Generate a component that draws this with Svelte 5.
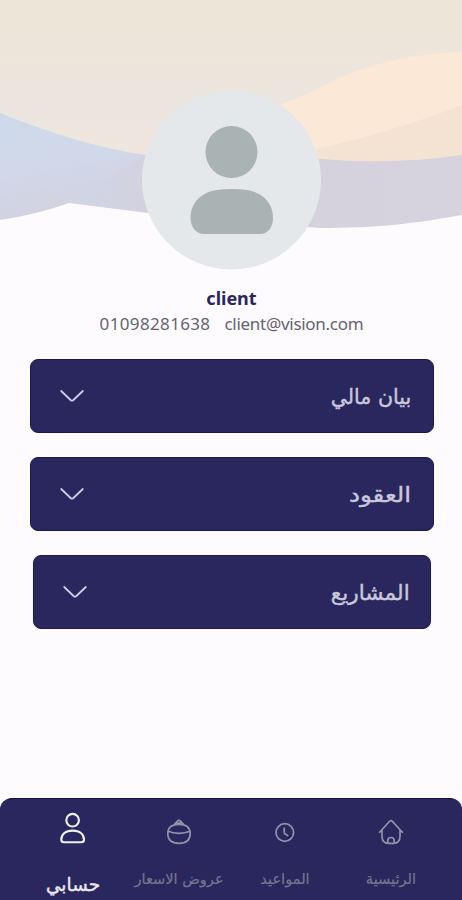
<script lang="ts">
  type Section = { title: string; stretch: number; narrow?: boolean };
  type Tab = { id: string; label: string };

  const user = { name: "client", phone: "01098281638", email: "client@vision.com" };

  const sections: Section[] = [
    { title: "بيان مالي", stretch: 0.98 },
    { title: "العقود", stretch: 1.17 },
    { title: "المشاريع", stretch: 1.03, narrow: true },
  ];

  const tabs: Tab[] = [
    { id: "home", label: "الرئيسية" },
    { id: "visits", label: "المواعيد" },
    { id: "offers", label: "عروض الاسعار" },
    { id: "account", label: "حسابي" },
  ];

  let active = $state("account");
</script>

<div class="screen" dir="rtl">
  <header>
    <svg class="waves" viewBox="0 0 462 270" aria-hidden="true">
      <defs>
        <linearGradient id="sand" x1="0" y1="0" x2="0" y2="1">
          <stop offset="0" stop-color="#ece4d6" />
          <stop offset="0.35" stop-color="#eee6db" />
          <stop offset="0.65" stop-color="#ece5df" />
          <stop offset="1" stop-color="#efe6de" />
        </linearGradient>
        <linearGradient id="sky" x1="0" y1="0" x2="0.25" y2="1">
          <stop offset="0" stop-color="#cddaeb" />
          <stop offset="0.5" stop-color="#d0d8e9" />
          <stop offset="1" stop-color="#d3d1e0" />
        </linearGradient>
        <linearGradient id="dusk" x1="0" y1="0" x2="1" y2="0">
          <stop offset="0" stop-color="#d0d5e7" />
          <stop offset="0.25" stop-color="#d4d0dc" />
          <stop offset="1" stop-color="#d6d3de" />
        </linearGradient>
      </defs>
      <path fill="url(#sand)" d="M0 0H462V165H0Z" />
      <path fill="#fbe8d6" d="M240 165V118Q285 106 335 80Q392 54 462 52V160Z" />
      <path fill="#f4e3d2" d="M300 163L320 148C365 138 410 125 462 105V165Z" />
      <path fill="url(#dusk)" d="M70 138Q105 150 143 155L320 159Q393 165 462 155V215Q390 229 320 228Q240 222 148 213L69 203Z" />
      <path fill="url(#sky)" d="M0 113C45 131 92 147 145 155L69 203Q35 215 0 220Z" />
    </svg>
    <svg class="avatar" viewBox="0 0 180 180" aria-label={user.name}>
      <circle cx="90.5" cy="90" r="89.5" fill="#e4e8ea" />
      <circle cx="90.5" cy="62" r="26" fill="#a9b3b4" />
      <path fill="#a9b3b4" d="M63 144H119C127 144 132 137 132 128C132 111 119 102 106 100Q91 98 76 100C62 102 49.5 111 49.5 128C49.5 137 55 144 63 144Z" />
    </svg>
  </header>

  <div class="identity" dir="ltr">
    <h1>{user.name}</h1>
    <p>
      <span class="phone">{user.phone}</span>
      <span class="email">{user.email}</span>
    </p>
  </div>

  <main>
    {#each sections as section}
      <button class="card" class:narrow={section.narrow}>
        <span style:transform="scaleX({section.stretch})">{section.title}</span>
        <svg width="24" height="14" viewBox="0 0 24 14">
          <path d="M1.2 2L10.6 11Q12 12.2 13.4 11L22.8 2" />
        </svg>
      </button>
    {/each}
  </main>

  <nav>
    {#each tabs as tab}
      <button class="tab {tab.id}" class:active={active === tab.id} onclick={() => (active = tab.id)}>
        <svg width="28" height="36" viewBox="0 0 28 36">
          {#if tab.id === "home"}
            <path d="M2.6 18.2L12.6 7.3Q14 5.8 15.4 7.3L25.4 18.2M5 16V22Q5 29.3 11.5 29.3H16.5Q23 29.3 23 22V16M10.8 29V26.5Q10.8 23.5 14 23.5T17.2 26.5V29" />
          {:else if tab.id === "visits"}
            <circle cx="13.8" cy="18.5" r="8.8" />
            <path d="M13.2 14V18.3Q13.2 19.4 14.2 20L16.6 21.5" />
          {:else if tab.id === "offers"}
            <path d="M2.8 19.5C2.8 13 7 10.3 14 10.3S25.2 13 25.2 19.5C25.2 26.5 21 29.3 14 29.3S2.8 26.5 2.8 19.5ZM3.2 17.3Q8 19.3 14 19.3T24.8 17.3M9 10.8L12.3 7.2Q14 5.8 15.7 7.2L19 10.8M12 9.2H16" />
          {:else}
            <circle cx="13.6" cy="6.2" r="6.3" />
            <path d="M5 28.3H22.3Q25 28.3 25 25.8C25 20 20.5 16.6 13.6 16.6S2.3 20 2.3 25.8Q2.3 28.3 5 28.3Z" />
          {/if}
        </svg>
        <span>{tab.label}</span>
      </button>
    {/each}
  </nav>
</div>

<style>
  :global(body) {
    background: #fdfbfe;
  }
  .screen {
    height: 900px;
    display: flex;
    flex-direction: column;
    overflow: hidden;
    background: #fdfbfe;
    font-family: "DejaVu Sans", sans-serif;
  }
  header {
    display: grid;
    height: 270px;
    flex: none;
  }
  .waves,
  .avatar {
    grid-area: 1 / 1;
  }
  .waves {
    width: 462px;
    height: 270px;
  }
  .avatar {
    width: 180px;
    height: 180px;
    place-self: end center;
  }
  .identity {
    height: 89px;
    flex: none;
    text-align: center;
    font-family: "Noto Sans", sans-serif;
  }
  h1 {
    margin: 0;
    padding: 15px 0 0 1px;
    font-size: 18px;
    line-height: 26px;
    font-weight: 700;
    color: #2a255d;
  }
  p {
    display: flex;
    justify-content: center;
    gap: 14px;
    margin: 0;
    padding-left: 1px;
    font-size: 17px;
    line-height: 26px;
    color: #66636f;
  }
  .phone {
    letter-spacing: 0.35px;
  }
  .email {
    letter-spacing: -0.28px;
  }
  main {
    display: flex;
    flex-direction: column;
    gap: 24px;
    padding: 0 28.5px 0 30px;
  }
  button {
    border: 0;
    font-family: inherit;
    cursor: pointer;
  }
  .card {
    display: flex;
    align-items: center;
    justify-content: space-between;
    height: 74px;
    padding: 0 21px 0 29px;
    box-sizing: border-box;
    border: 1px solid #1c1755;
    border-radius: 8px;
    background: #29275d;
    color: #c9c7dc;
    font-size: 21px;
    -webkit-text-stroke: 0.4px #c9c7dc;
  }
  .card.narrow {
    margin: 0 3px;
    padding-right: 20px;
  }
  .card span {
    padding-top: 2px;
    transform-origin: right center;
  }
  .card svg {
    fill: none;
    stroke: #cfcde6;
    stroke-width: 1.8;
    stroke-linecap: round;
  }
  nav {
    display: grid;
    grid-template-columns: repeat(4, 106px);
    margin-top: auto;
    height: 102px;
    padding: 0 18px 0 20px;
    box-sizing: border-box;
    border-top: 1px solid #14104d;
    border-radius: 12px 12px 0 0;
    background: #29275d;
  }
  .tab {
    display: flex;
    flex-direction: column;
    align-items: center;
    padding: 15px 0 0;
    background: none;
    color: #77758f;
    font-size: 14.6px;
    -webkit-text-stroke: 0.2px currentColor;
    white-space: nowrap;
  }
  .tab svg {
    overflow: visible;
    fill: none;
    stroke: #9492a9;
    stroke-width: 1.7;
    stroke-linecap: round;
    stroke-linejoin: round;
  }
  .tab span {
    line-height: 24px;
    margin-top: 17px;
  }
  .tab.active {
    color: #e9e8f3;
    font-size: 18.5px;
    -webkit-text-stroke-width: 0.4px;
  }
  .tab.active svg {
    stroke: #f0eff8;
    stroke-width: 2.1;
  }
  .tab.active span {
    margin-top: 23px;
  }
</style>
